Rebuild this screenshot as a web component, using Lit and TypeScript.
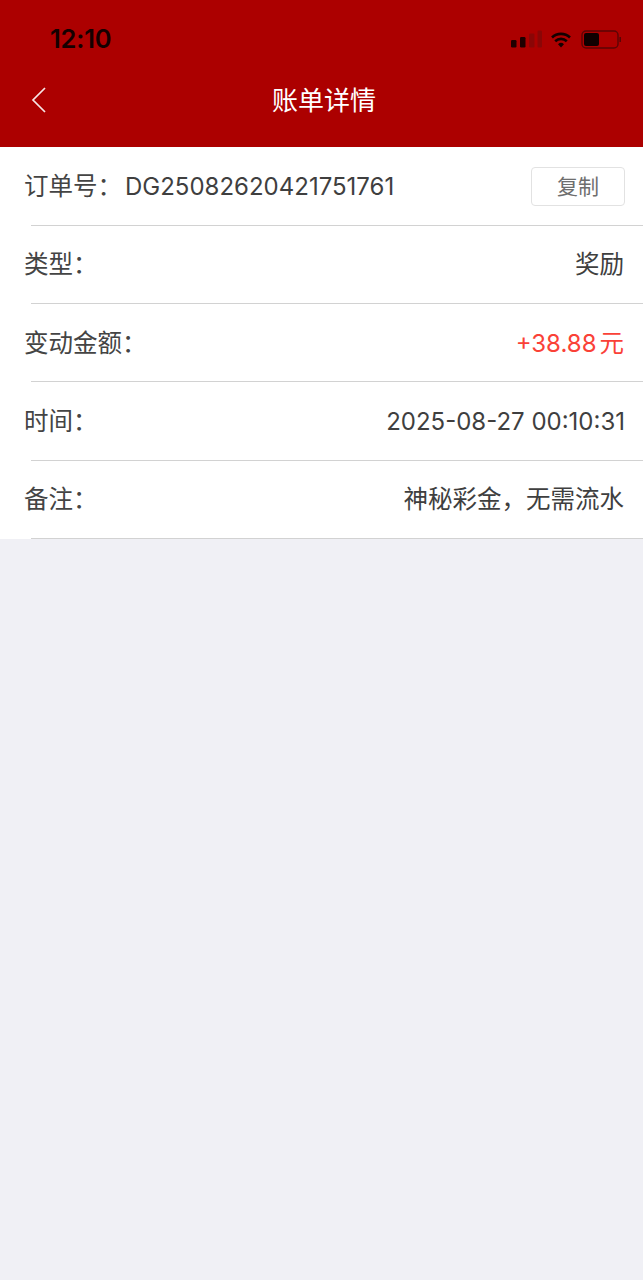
import { LitElement, html, css } from "lit";
import { customElement } from "lit/decorators.js";

const COLON = "\uFF1A";
const COMMA = "\uFF0C";

@customElement("app-root")
export class AppRoot extends LitElement {
  static styles = css`
    :host {
      display: block;
      width: 643px;
      height: 1280px;
      background: #f0f0f5;
      font-family: "Liberation Sans", "Noto Sans CJK SC", sans-serif;
      color: #3c3c3c;
      overflow: hidden;
    }
    .header {
      height: 147px;
      background: #ac0000;
      display: flex;
      flex-direction: column;
    }
    .status {
      height: 54px;
      padding: 24px 22px 0 50px;
      box-sizing: border-box;
      display: flex;
      justify-content: space-between;
      align-items: flex-start;
    }
    .clock {
      font-size: 25.5px;
      line-height: 30px;
      font-weight: 600;
      color: #140000;
      font-family: "Inter", "Liberation Sans", sans-serif;
      letter-spacing: -0.2px;
    }
    .status svg { display: block; margin-top: 6px; }
    .nav {
      flex: 1;
      display: flex;
      align-items: center;
      justify-content: center;
      position: relative;
      padding: 0 0 3px 5px;
    }
    .back {
      position: absolute;
      left: 31px;
      top: 32px;
      display: block;
    }
    .title {
      color: #fff;
      font-size: 26px;
      line-height: 30px;
      font-family: "Noto Sans CJK SC", sans-serif;
      font-weight: 400;
    }
    .list { background: #fff; height: 392px; padding-top: 0.2px; box-sizing: border-box; }
    .row {
      height: 78.4px;
      box-sizing: border-box;
      padding: 0 18px 0 24px;
      display: flex;
      align-items: center;
      justify-content: space-between;
      position: relative;
      font-size: 24px;
      font-family: "Inter", "Noto Sans CJK SC", sans-serif;
      font-weight: 400;
    }
    .row::after {
      content: "";
      position: absolute;
      left: 31px;
      right: 0;
      bottom: 0;
      height: 1px;
      background: #d2d2d2;
    }
    .cjk {
      font-family: "Noto Sans CJK SC", sans-serif;
      font-weight: 400;
      position: relative;
      top: -2px;
      font-size: 24.5px;
    }
    .label { color: #444; }
    .order { display: flex; align-items: center; }
    .order .label { width: 101px; }
    .value { color: #3f3f3f; }
    .value.cjk { left: -1px; }
    .red { color: #fa4137; display: flex; gap: 3px; align-items: center; }
    .red .cjk { left: -1px; }
    .amount { position: relative; left: -1px; }
    .copy {
      width: 94px;
      height: 39px;
      box-sizing: border-box;
      border: 1px solid #e2e2e2;
      border-radius: 4px;
      display: flex;
      align-items: center;
      justify-content: center;
      font-size: 21px;
      color: #6e6e6e;
      top: 0;
      margin-top: 1px;
      padding-bottom: 3px;
    }
  `;

  render() {
    return html`
      <div class="header">
        <div class="status">
          <div class="clock">12:10</div>
          <svg width="110" height="22" viewBox="0 0 110 22">
            <g fill="#1e0000">
              <rect x="0" y="10" width="5.5" height="7.5" rx="1.2"></rect>
              <rect x="9" y="7" width="5.5" height="10.5" rx="1.2"></rect>
            </g>
            <g fill="#8a0606">
              <rect x="18" y="3.5" width="5.5" height="14" rx="1.2"></rect>
              <rect x="26.5" y="0.5" width="4.5" height="17" rx="1.2"></rect>
            </g>
            <path d="M41 7.5a13 13 0 0 1 18 0M44.2 11.2a8.5 8.5 0 0 1 11.6 0" fill="none" stroke="#140000" stroke-width="2.6"></path>
            <path d="M47 14.2a4.4 4.4 0 0 1 6 0l-3 3.4z" fill="#140000"></path>
            <rect x="71" y="1" width="36" height="17" rx="4" fill="none" stroke="#5a0505" stroke-width="1.4"></rect>
            <rect x="73" y="3" width="15" height="13" rx="2" fill="#0f0000"></rect>
            <rect x="108.4" y="7" width="1.6" height="5" fill="#5a0505"></rect>
          </svg>
        </div>
        <div class="nav">
          <svg class="back" width="16" height="28" viewBox="0 0 16 28">
            <path d="M14 2 L2 14 L14 26" fill="none" stroke="#f6e6e6" stroke-width="1.7"></path>
          </svg>
          <div class="title">账单详情</div>
        </div>
      </div>
      <div class="list">
        <div class="row">
          <div class="order">
            <span class="label cjk">订单号${COLON}</span>
            <span class="value">DG25082620421751761</span>
          </div>
          <div class="copy cjk">复制</div>
        </div>
        <div class="row">
          <span class="label cjk">类型${COLON}</span>
          <span class="value cjk">奖励</span>
        </div>
        <div class="row">
          <span class="label cjk">变动金额${COLON}</span>
          <span class="value red"><span class="amount">+38.88</span><span class="cjk">元</span></span>
        </div>
        <div class="row">
          <span class="label cjk">时间${COLON}</span>
          <span class="value">2025-08-27 00:10:31</span>
        </div>
        <div class="row">
          <span class="label cjk">备注${COLON}</span>
          <span class="value cjk">神秘彩金${COMMA}无需流水</span>
        </div>
      </div>
    `;
  }
}
